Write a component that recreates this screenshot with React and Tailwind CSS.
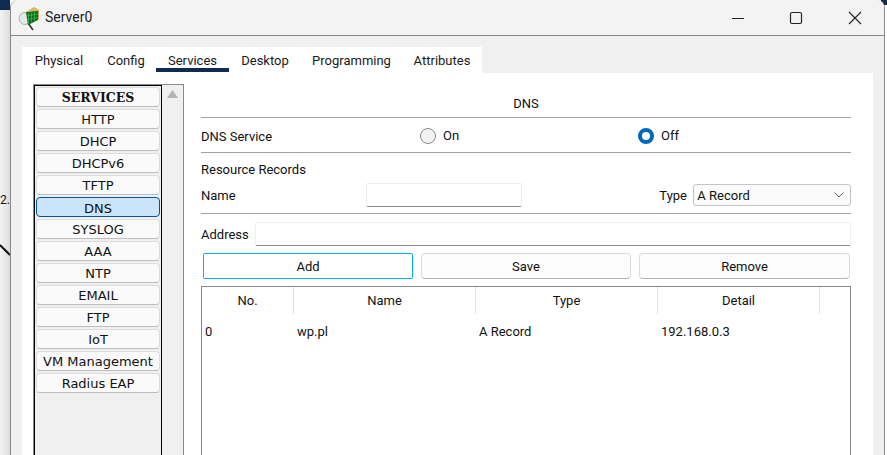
const items = ["HTTP","DHCP","DHCPv6","TFTP","DNS","SYSLOG","AAA","NTP","EMAIL","FTP","IoT","VM Management","Radius EAP"];
const tabs = [["Physical","w-[74px]"],["Config","w-[60px]"],["Services","w-[73px]"],["Desktop","w-[72px]"],["Programming","w-[101px]"],["Attributes","w-[80px]"]];
const cols = [["No.","w-[92px]"],["Name","w-[182px]"],["Type","w-[182px]"],["Detail","w-[162px]"]];

function ServerIcon() {
  return (
    <svg width="22" height="26" viewBox="0 0 22 26" className="shrink-0 ml-[-1px]">
      <circle cx="7" cy="13.5" r="6" fill="#e4e8e6" stroke="#a8b0ac" strokeWidth="1" />
      <path d="M10 18 L15 25" stroke="#333" strokeWidth="1.6" />
      <path d="M8 7 L20 5 L20 15 L10 20 Z" fill="#0d6b1f" />
      <path d="M8 7 L16 2 L21 5 L20 6 Z" fill="#d9b765" />
      <path d="M20 5 L21 5 L21 14 L20 15 Z" fill="#c9a04e" />
      <path d="M10.5 8 V19 M13.5 7.5 V17.5 M16.5 7 V16 M9 11 L20 9 M9 14.5 L20 12.5" stroke="#39c24a" strokeWidth="0.7" />
    </svg>
  );
}

function Radio({ on, label, className }) {
  return (
    <div className={"flex items-center gap-[7px] " + className}>
      {on ? (
        <span className="w-4 h-4 rounded-full bg-white border-[4.5px] border-[#0067c0]" />
      ) : (
        <span className="w-4 h-4 rounded-full bg-[#f3f3f3] border border-[#8a8a8a]" />
      )}
      <span>{label}</span>
    </div>
  );
}

export default function App() {
  return (
    <div className="relative w-[887px] h-[455px] overflow-hidden flex bg-white text-[13px] text-[#111] font-['Roboto','Noto_Sans',sans-serif]">
      <div className="relative w-[10px] shrink-0 bg-gradient-to-r from-[#f4f4f4] to-[#dcdcdc]">
        <span className="absolute left-0 top-[193px] text-[12px] leading-[14px]">2.</span>
        <svg className="absolute left-0 top-[240px]" width="10" height="20" viewBox="0 0 10 20"><path d="M0 5 L10 15" stroke="#111" strokeWidth="2" /></svg>
      </div>
      <div className="absolute left-0 top-0 w-[10px] h-[10px] bg-[#0f2b52]" />
      <div className="absolute right-0 top-0 w-[6px] h-[5px] bg-[#0f2b52]" />
      <div className="relative w-[875px] h-[455px] shrink-0 flex flex-col rounded-t-[8px] border-l border-r border-[#8a8a8a] bg-[#f0f0f0] overflow-hidden">
        <div className="h-[36px] shrink-0 flex items-center bg-[#f3f3f3] border-b border-[#8a8a8a] pl-[8px]">
          <ServerIcon />
          <span className="ml-[5px] text-[14px] leading-[18px] text-[#222] mt-[-2px]">Server0</span>
          <div className="ml-auto flex items-center text-[#111]">
            <svg width="14" height="14" viewBox="0 0 14 14" className="mr-[44px]"><path d="M1 7.5 H13" stroke="#222" strokeWidth="1" /></svg>
            <svg width="14" height="14" viewBox="0 0 14 14" className="mr-[45px]"><rect x="1.5" y="1.5" width="11" height="11" rx="1.5" fill="none" stroke="#222" strokeWidth="1.2" /></svg>
            <svg width="14" height="14" viewBox="0 0 14 14" className="mr-[22px]"><path d="M1 1 L13 13 M13 1 L1 13" stroke="#222" strokeWidth="1.1" /></svg>
          </div>
        </div>

        <div className="ml-[11px] mt-[11px] mr-[11px] flex-1 flex flex-col min-h-0">
          <div className="flex h-[26px] shrink-0 w-[460px] bg-white">
            {tabs.map(([t, w]) => (
              <div key={t} className={"relative h-full flex items-center justify-center pt-[2px] text-[#1a1a1a] " + w}>
                {t}
                {t === "Services" && <div className="absolute left-0 right-0 top-[21px] h-[4px] bg-[#0f2b52]" />}
              </div>
            ))}
          </div>
          <div className="flex-1 bg-white flex pl-[11px] pt-[11px] min-h-0">
            <div className="w-[151px] shrink-0 h-[400px] bg-[#f0f0f0] border-t border-l border-r border-[#8a8a8a] flex">
              <div className="w-[128px] shrink-0 border-t border-l border-r border-black pl-[1px] pt-[1px] font-['DejaVu_Sans',sans-serif] text-[13px] flex flex-col gap-[2px]">
                <div className="w-[124px] h-[20px] rounded-[4px] bg-[#fafafa] border border-[#dcdcdc] border-b-[#bdbdbd] flex items-center justify-center pt-[3px] font-bold text-[12.5px] font-['DejaVu_Serif','DejaVu_Sans',serif]">SERVICES</div>
                {items.map((t) => (
                  <div key={t} className={t === "DNS"
                    ? "w-[124px] h-[20px] rounded-[4px] bg-[#cce4f7] border border-[#005499] flex items-center justify-center pt-[4px]"
                    : "w-[124px] h-[20px] rounded-[4px] bg-[#fafafa] border border-[#dcdcdc] border-b-[#bdbdbd] flex items-center justify-center pt-[1px]"}>{t}</div>
                ))}
              </div>
              <div className="flex-1 flex justify-center pt-[5px]">
                <svg width="11" height="8" viewBox="0 0 11 8"><path d="M5.5 0 L11 8 H0 Z" fill="#b4b4b4" /></svg>
              </div>
            </div>

            <div className="w-[650px] ml-[17px] shrink-0 flex flex-col">
              <div className="h-[34px] shrink-0 border-b border-[#a0a0a0] flex items-center justify-center pt-[7px]">DNS</div>
              <div className="h-[35px] shrink-0 border-b border-[#a0a0a0] flex items-center pt-[2px]">
                <span className="w-[219px] pt-[2px]">DNS Service</span>
                <Radio on={false} label="On" className="w-[218px]" />
                <Radio on label="Off" />
              </div>
              <div className="h-[61px] shrink-0 border-b border-[#a0a0a0] flex flex-col">
                <div className="h-[30px] flex items-center pt-[3px]">Resource Records</div>
                <div className="flex items-center h-[24px] mt-[0px]">
                  <span className="w-[165px] pt-[1px]">Name</span>
                  <div className="w-[157px] h-[24px] bg-white rounded-[2px] border border-[#eeeeee] border-b-[#8a8a8a]" />
                  <span className="ml-[137px] w-[34px] pt-[1px]">Type</span>
                  <div className="w-[158px] h-[22px] rounded-[3px] bg-[#fbfbfb] border border-[#c4c4c4] flex items-center pl-[3px] pr-[6px] justify-between">
                    <span className="pt-[1px]">A Record</span>
                    <svg width="10" height="6" viewBox="0 0 10 6"><path d="M0.5 0.5 L5 5 L9.5 0.5" fill="none" stroke="#666" strokeWidth="1" /></svg>
                  </div>
                </div>
              </div>
              <div className="flex items-center mt-[8px] h-[24px] shrink-0">
                <span className="w-[54px] pt-[1px]">Address</span>
                <div className="w-[596px] h-[24px] bg-white rounded-[2px] border border-[#eeeeee] border-b-[#8a8a8a]" />
              </div>
              <div className="flex gap-[8px] mt-[7px] ml-[2px] h-[26px] shrink-0">
                <div className="w-[210px] rounded-[2px] border-[1.5px] border-[#00b4e6] flex items-center justify-center pt-[2px]">Add</div>
                <div className="w-[210px] rounded-[4px] bg-[#fcfcfc] border border-[#dcdcdc] border-b-[#b4b4b4] flex items-center justify-center pt-[2px]">Save</div>
                <div className="w-[211px] rounded-[4px] bg-[#fcfcfc] border border-[#dcdcdc] border-b-[#b4b4b4] flex items-center justify-center pt-[2px]">Remove</div>
              </div>
              <div className="mt-[7px] h-[200px] shrink-0 border border-[#848891] bg-white">
                <div className="flex h-[27px]">
                  {cols.map(([c, w]) => (
                    <div key={c} className={"h-full flex items-center justify-center border-r border-[#e2e2e2] " + w}>{c}</div>
                  ))}
                </div>
                <div className="flex h-[36px] items-center">
                  <span className="w-[92px] pl-[3px]">0</span>
                  <span className="w-[182px] pl-[3px]">wp.pl</span>
                  <span className="w-[182px] pl-[3px]">A Record</span>
                  <span className="pl-[3px]">192.168.0.3</span>
                </div>
              </div>
            </div>
          </div>
        </div>
      </div>
    </div>
  );
}
